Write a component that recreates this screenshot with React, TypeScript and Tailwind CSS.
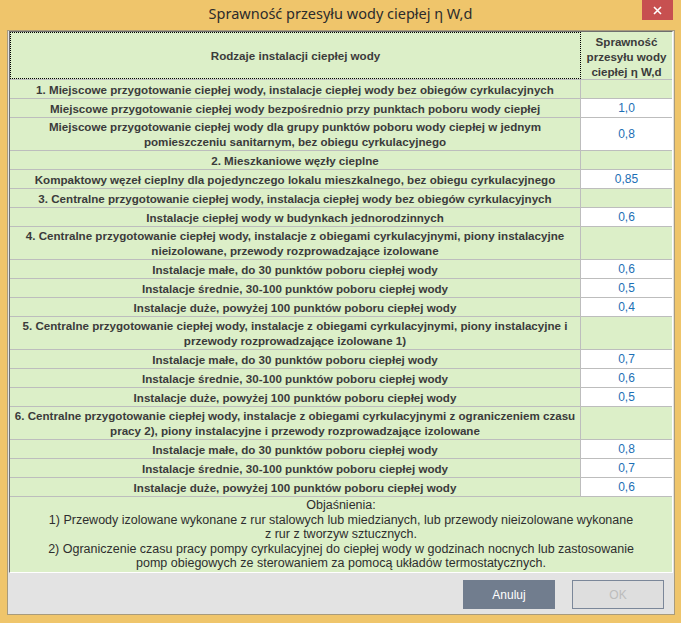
type Row = { lines: string[]; value?: string };

const rows: Row[] = [
  { lines: ["1. Miejscowe przygotowanie ciepłej wody, instalacje ciepłej wody bez obiegów cyrkulacyjnych"] },
  { lines: ["Miejscowe przygotowanie ciepłej wody bezpośrednio przy punktach poboru wody ciepłej"], value: "1,0" },
  {
    lines: [
      "Miejscowe przygotowanie ciepłej wody dla grupy punktów poboru wody ciepłej w jednym",
      "pomieszczeniu sanitarnym, bez obiegu cyrkulacyjnego",
    ],
    value: "0,8",
  },
  { lines: ["2. Mieszkaniowe węzły cieplne"] },
  { lines: ["Kompaktowy węzeł cieplny dla pojedynczego lokalu mieszkalnego, bez obiegu cyrkulacyjnego"], value: "0,85" },
  { lines: ["3. Centralne przygotowanie ciepłej wody, instalacja ciepłej wody bez obiegów cyrkulacyjnych"] },
  { lines: ["Instalacje ciepłej wody w budynkach jednorodzinnych"], value: "0,6" },
  {
    lines: [
      "4. Centralne przygotowanie ciepłej wody, instalacje z obiegami cyrkulacyjnymi, piony instalacyjne",
      "nieizolowane, przewody rozprowadzające izolowane",
    ],
  },
  { lines: ["Instalacje małe, do 30 punktów poboru ciepłej wody"], value: "0,6" },
  { lines: ["Instalacje średnie, 30-100 punktów poboru ciepłej wody"], value: "0,5" },
  { lines: ["Instalacje duże, powyżej 100 punktów poboru ciepłej wody"], value: "0,4" },
  {
    lines: [
      "5. Centralne przygotowanie ciepłej wody, instalacje z obiegami cyrkulacyjnymi, piony instalacyjne i",
      "przewody rozprowadzające izolowane 1)",
    ],
  },
  { lines: ["Instalacje małe, do 30 punktów poboru ciepłej wody"], value: "0,7" },
  { lines: ["Instalacje średnie, 30-100 punktów poboru ciepłej wody"], value: "0,6" },
  { lines: ["Instalacje duże, powyżej 100 punktów poboru ciepłej wody"], value: "0,5" },
  {
    lines: [
      "6. Centralne przygotowanie ciepłej wody, instalacje z obiegami cyrkulacyjnymi z ograniczeniem czasu",
      "pracy 2), piony instalacyjne i przewody rozprowadzające izolowane",
    ],
  },
  { lines: ["Instalacje małe, do 30 punktów poboru ciepłej wody"], value: "0,8" },
  { lines: ["Instalacje średnie, 30-100 punktów poboru ciepłej wody"], value: "0,7" },
  { lines: ["Instalacje duże, powyżej 100 punktów poboru ciepłej wody"], value: "0,6" },
];

const notes = [
  "Objaśnienia:",
  "1) Przewody izolowane wykonane z rur stalowych lub miedzianych, lub przewody nieizolowane wykonane",
  "z rur z tworzyw sztucznych.",
  "2) Ograniczenie czasu pracy pompy cyrkulacyjnej do ciepłej wody w godzinach nocnych lub zastosowanie",
  "pomp obiegowych ze sterowaniem za pomocą układów termostatycznych.",
];

function TableRow({ row }: { row: Row }) {
  const tall = row.lines.length > 1;
  return (
    <div
      className={`grid grid-cols-[571px_1fr] border-b border-[#bdbdbd] ${tall ? "h-[33px]" : "h-[19px]"}`}
    >
      <div className="flex flex-col items-center justify-center border-r border-[#bdbdbd] bg-[#dcefc8] text-[11.6px] font-bold leading-[15px] text-[#3b3b3b] whitespace-nowrap">
        {row.lines.map((l, i) => (
          <span key={i}>{l}</span>
        ))}
      </div>
      <div
        className={`flex items-center justify-center text-[12px] text-[#1d6fb5] ${row.value ? "bg-white" : "bg-[#dcefc8]"}`}
      >
        {row.value}
      </div>
    </div>
  );
}

export default function App() {
  return (
    <div
      className="relative w-[681px] h-[623px] bg-[#efc56b] flex flex-col"
      style={{ fontFamily: '"Liberation Sans", Arial, sans-serif' }}
    >
      {/* title bar */}
      <div className="h-[30px] flex items-center justify-center">
        <span
          className="text-[14.5px] text-[#2b2b2b] -mt-[2px]"
          style={{ fontFamily: '"Noto Sans", "Open Sans", sans-serif' }}
        >
          Sprawność przesyłu wody ciepłej η W,d
        </span>
      </div>
      <button className="absolute top-0 right-[8px] w-[31px] h-[20px] bg-[#c75050] flex items-center justify-center">
        <svg width="9" height="9" viewBox="0 0 9 9">
          <path d="M1 1 L8 8 M8 1 L1 8" stroke="#fff" strokeWidth="1.6" />
        </svg>
      </button>

      {/* client area */}
      <div className="ml-[7px] w-[668px] h-[585px] border border-[#a89b7c] bg-[#e3e3e3] flex flex-col px-[1px]">
        <div className="border-l border-t border-[#6e6e6e] border-r border-r-white border-b border-b-white">
          <div className="grid grid-cols-[571px_1fr] h-[48px] border-b border-[#bdbdbd]">
            <div className="flex items-center justify-center border border-dotted border-black bg-[#dcefc8] text-[11.6px] font-bold text-[#3b3b3b]">
              Rodzaje instalacji ciepłej wody
            </div>
            <div className="flex flex-col items-center justify-center pt-[2px] bg-[#dcefc8] text-[11.6px] font-bold leading-[15px] text-[#3b3b3b] whitespace-nowrap">
              <span>Sprawność</span>
              <span>przesyłu wody</span>
              <span>ciepłej η W,d</span>
            </div>
          </div>
          {rows.map((r, i) => (
            <TableRow key={i} row={r} />
          ))}
          <div className="h-[75px] bg-[#dcefc8] flex flex-col items-center justify-center text-[12.5px] leading-[14.5px] text-[#2e2e2e] whitespace-nowrap">
            {notes.map((n, i) => (
              <span key={i}>{n}</span>
            ))}
          </div>
        </div>

        <div className="flex justify-end gap-[17px] pr-[9px] pt-[7px]">
          <button className="w-[92px] h-[29px] bg-[#717d8e] text-white text-[12px]">Anuluj</button>
          <button className="w-[92px] h-[29px] bg-[#dedede] border border-[#7b8799] text-[#bcbcbc] text-[12px]">
            OK
          </button>
        </div>
      </div>
    </div>
  );
}
